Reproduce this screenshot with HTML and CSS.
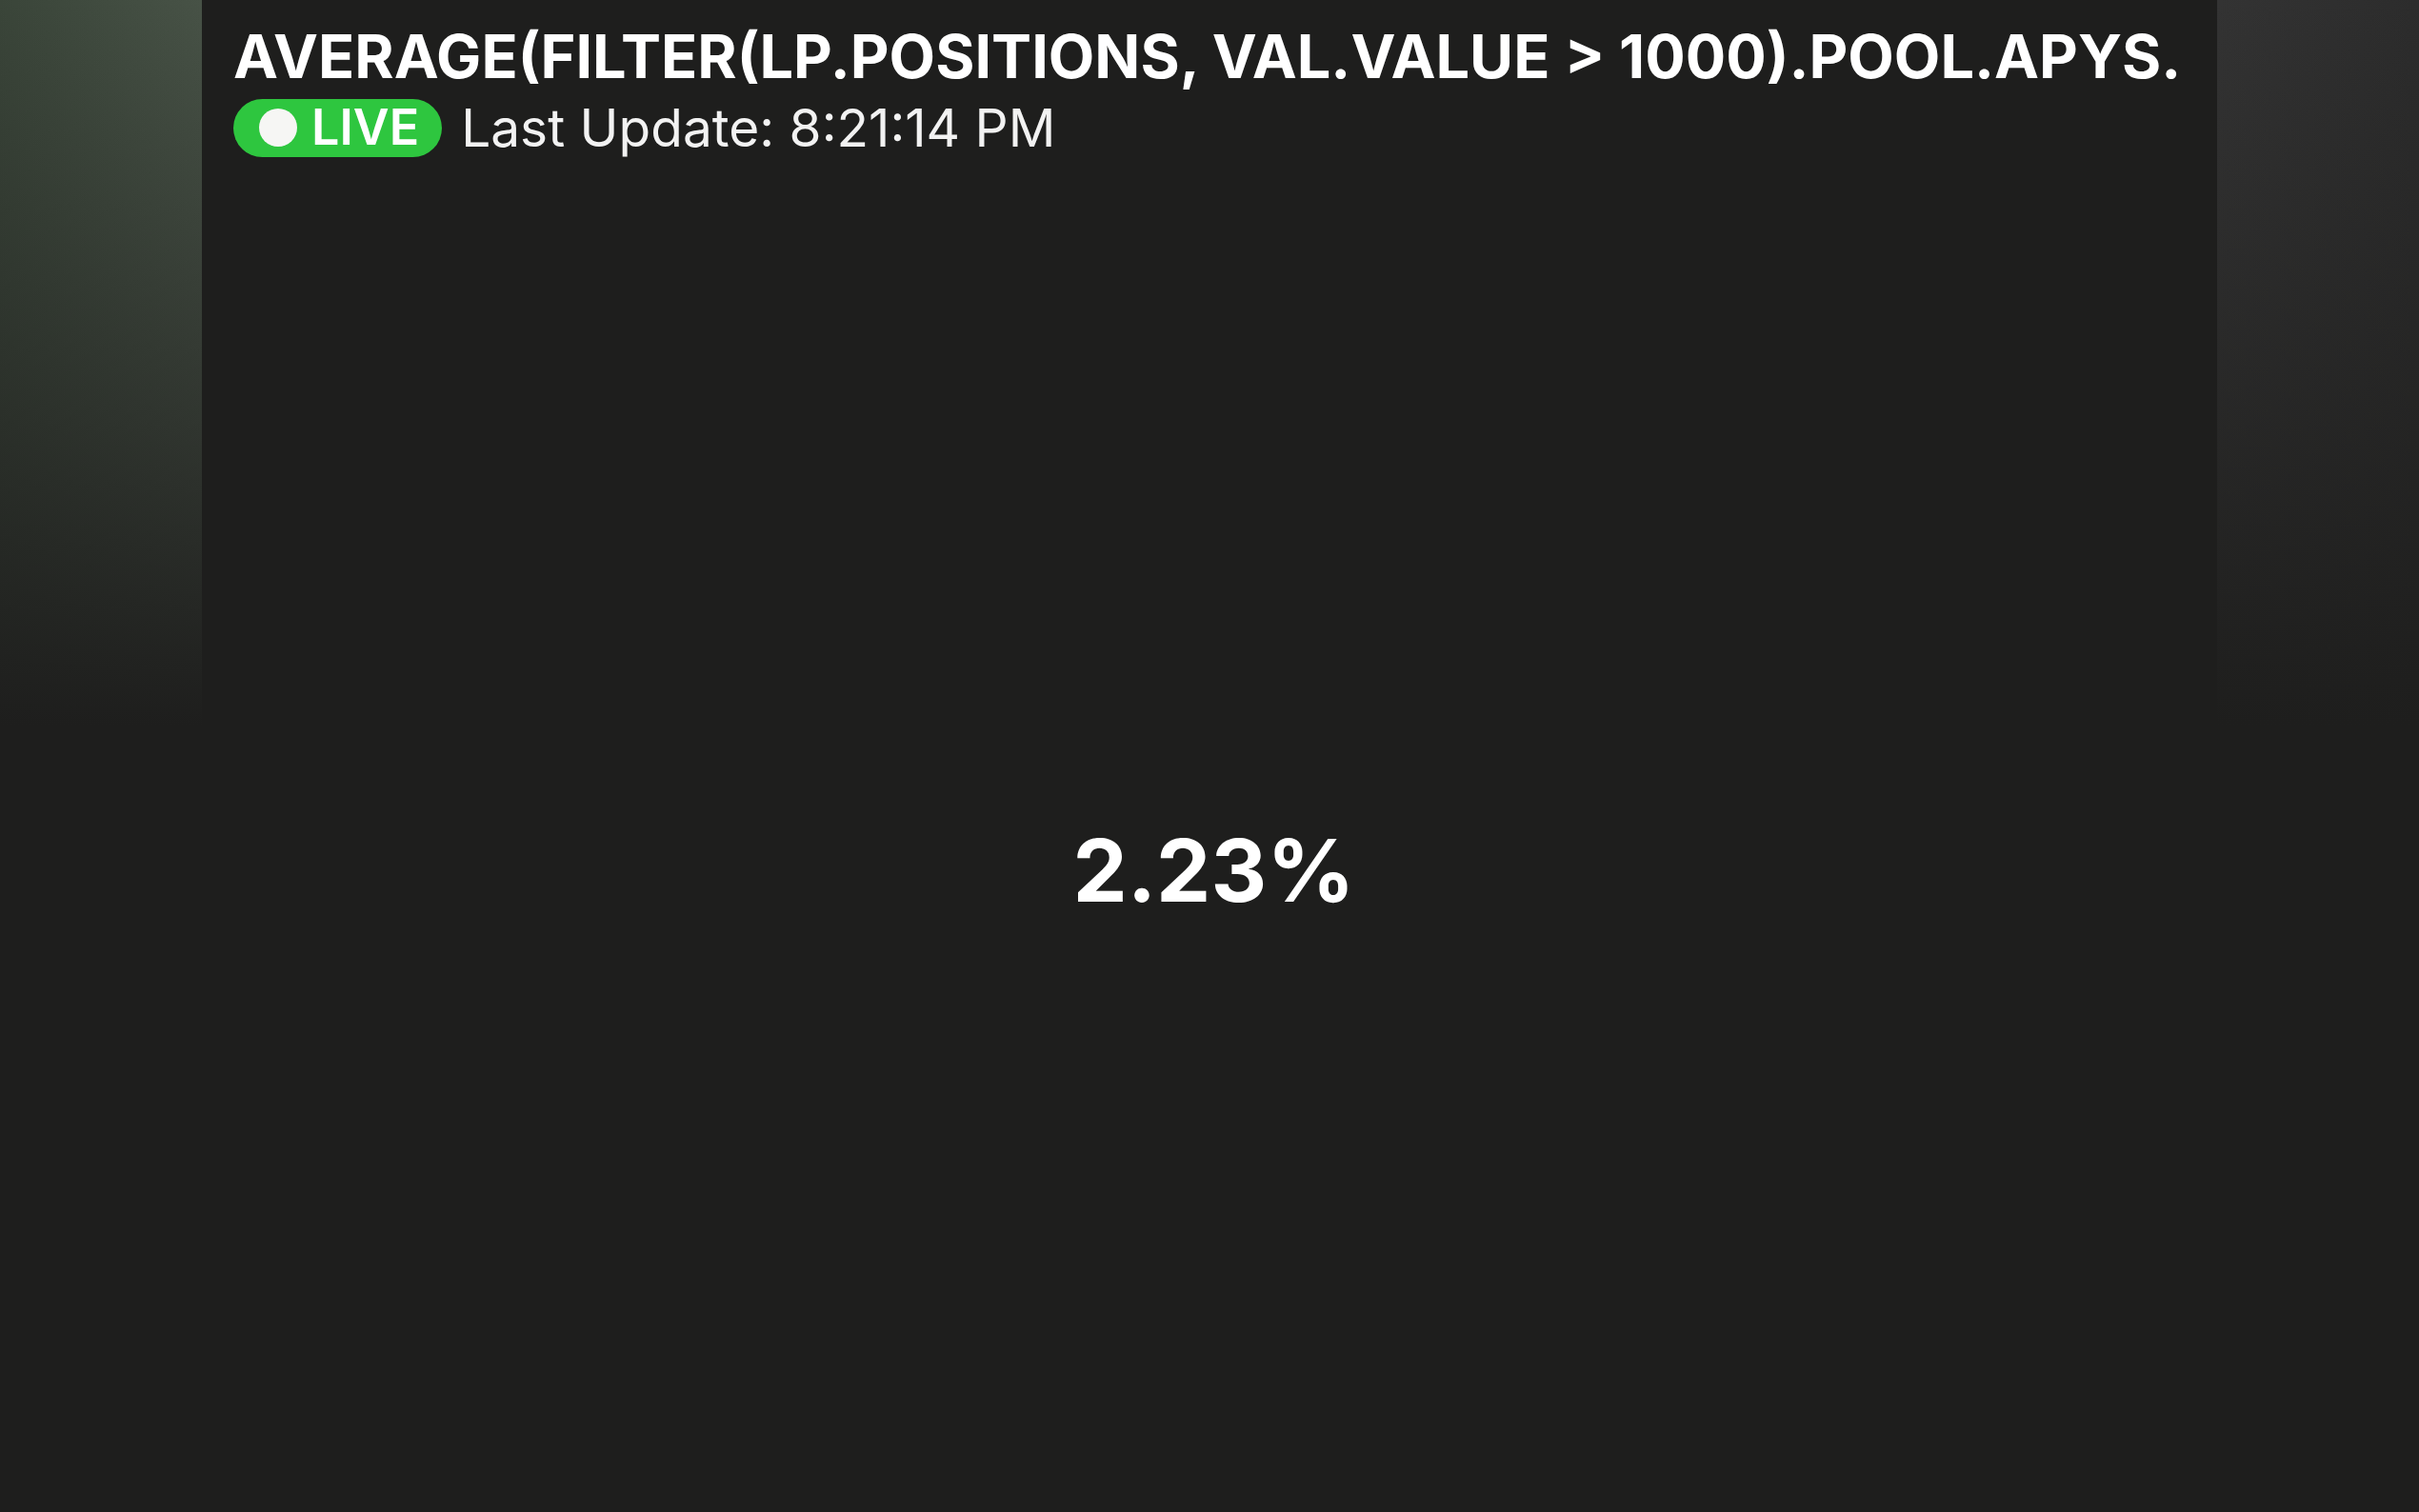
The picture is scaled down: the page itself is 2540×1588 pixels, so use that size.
FILE: index.html
```html
<!DOCTYPE html>
<html lang="en">
<head>
<meta charset="utf-8">
<title>Average APY</title>
<link rel="stylesheet" href="styles.css">
</head>
<body>
<main class="panel">
  <header class="panel-head">
    <h1 class="query">AVERAGE(FILTER(LP.POSITIONS, VAL.VALUE &gt; 1000).POOL.APYS.</h1>
    <div class="status">
      <span class="live"><span class="live-dot"></span>LIVE</span>
      <span class="updated">Last Update: 8:21:14 PM</span>
    </div>
  </header>
  <section class="panel-body">
    <div class="value">2.23%</div>
  </section>
</main>
</body>
</html>
```

FILE: styles.css
```css
html, body {
  margin: 0;
  height: 100%;
}

body {
  font-family: Inter, "Noto Sans", "Liberation Sans", sans-serif;
  color: #ffffff;
  background:
    linear-gradient(to bottom, rgba(30, 30, 29, 0) 0%, rgba(30, 30, 29, 0.55) 28%, #1e1e1d 48%),
    linear-gradient(to right, #3a4539 0%, #475246 8.3%, #3f463e 30%, #333333 70%, #333333 91.7%, #2c2c2c 100%);
  display: flex;
  justify-content: center;
  overflow: hidden;
}

.panel {
  width: 2116px;
  height: 100%;
  background: #1e1e1d;
  display: flex;
  flex-direction: column;
  box-sizing: border-box;
  padding: 0 24px 0 33px;
}

.panel-head {
  padding-top: 23px;
  display: flex;
  flex-direction: column;
  gap: 6px;
}

.query {
  margin: 0;
  font-size: 63px;
  font-weight: 700;
  line-height: 72px;
  white-space: nowrap;
  letter-spacing: 0;
}

.status {
  display: flex;
  align-items: center;
  gap: 20px;
}

.live {
  display: inline-flex;
  align-items: center;
  gap: 15px;
  height: 61px;
  padding: 0 24px 0 27px;
  border-radius: 31px;
  background: #2ec63f;
  font-size: 52px;
  font-weight: 600;
  line-height: 1;
}

.live-dot {
  width: 40px;
  height: 40px;
  border-radius: 50%;
  background: #f6f6f4;
}

.updated {
  font-size: 55px;
  font-weight: 400;
  color: #f2f2f2;
}

.panel-body {
  flex: 1;
  display: flex;
  align-items: center;
  justify-content: center;
  padding-top: 73px;
}

.value {
  font-size: 91px;
  font-weight: 700;
}
```
